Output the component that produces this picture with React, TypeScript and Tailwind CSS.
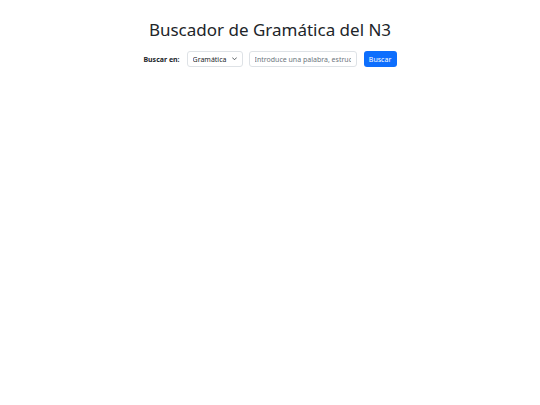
import { useState } from 'react';

export default function App() {
  const [mode, setMode] = useState('grammar');
  const [query, setQuery] = useState('');

  return (
    <div className="min-h-screen bg-white text-[#212529]" style={{ fontFamily: '"Noto Sans", "Open Sans", sans-serif' }}>
      <div className="flex flex-col items-center pt-[16px]">
        <h1 className="text-[17px] leading-[28px] font-normal">Buscador de Gramática del N3</h1>
        <form
          className="mt-[7px] flex h-[16px] items-center"
          onSubmit={e => e.preventDefault()}
        >
          <label className="mr-[7px] text-[7px] leading-none font-bold">Buscar en:</label>
          <div className="relative mr-[6px] flex">
            <select
              value={mode}
              onChange={e => setMode(e.target.value)}
              className="block h-[16px] w-[56px] appearance-none rounded-[3px] border border-[#dee2e6] bg-white pl-[5px] text-[7px] leading-none text-[#212529] outline-none"
            >
              <option value="grammar">Gramática</option>
              <option value="examples">Ejemplos</option>
            </select>
            <svg className="pointer-events-none absolute right-[6px] top-[6px] h-[4px] w-[5px]" viewBox="0 0 10 7" fill="none">
              <path d="M1 1l4 4 4-4" stroke="#343a40" strokeWidth="1.6" strokeLinecap="round" strokeLinejoin="round" />
            </svg>
          </div>
          <input
            value={query}
            onChange={e => setQuery(e.target.value)}
            placeholder="Introduce una palabra, estructura..."
            className="mr-[7px] block h-[16px] w-[108px] rounded-[3px] border border-[#dee2e6] bg-white px-[5px] text-[7px] text-[#212529] outline-none placeholder:text-[#6c757d]"
          />
          <button
            type="submit"
            className="block h-[16px] w-[33px] rounded-[3px] bg-[#0d6efd] text-[7px] leading-none text-white"
          >
            Buscar
          </button>
        </form>
      </div>
    </div>
  );
}
